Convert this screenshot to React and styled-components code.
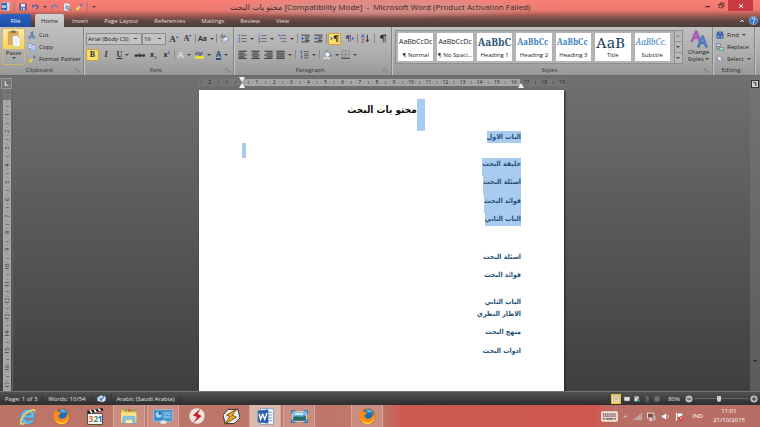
import React, { useState } from 'react';
import styled, { createGlobalStyle } from 'styled-components';

// every drawing sits on a 24 x 24 grid unless it is listed in boxes
const boxes = { paste: '0 0 42 54', keyboard: '0 0 48 32', explorer: '0 0 54 48', panel: '0 0 60 48', styles: '0 0 48 48' };

const lines = (rows) =>
  rows.map(([x, y, w]) => <rect key={y} x={x} y={y} width={w} height="2.6" fill="#333" />);

const firefox = (
  <>
    <circle cx="12" cy="12" r="11.5" fill="#e66000" />
    <circle cx="13" cy="9.5" r="8.5" fill="#1b6fb5" />
    <path d="M10 2c5-1 9 2 10 5-4-2-6 0-8-1z" fill="#57b7e6" />
    <path d="M1 8c1-3 2-4 4-6 0 2 1 3 3 3 2 0 3 1 3 2 0 2-3 2-3 4 0 4 5 5 8 3 3-1 4-4 4-8 3 4 3 9 1 12-3 5-9 6-13 4C2 20-1 14 1 8z" fill="#f58a1f" />
    <path d="M3 15c3 5 9 7 14 4 3-2 5-5 5-9 1 7-3 12-9 13-5 0-9-3-10-8z" fill="#ffc83a" />
  </>
);

const drawings = {
  word: (
    <>
      <rect x="5" y="1" width="18" height="22" fill="#f5f8fc" stroke="#6f8fbd" />
      <path d="M16 6h5M16 10h5M16 14h5M16 18h5" stroke="#7b9bcb" strokeWidth="1.5" />
      <path d="M1 4l15-2v20L1 20z" fill="#2b5fae" />
      <path d="M3 8l2 8 3-7 3 7 3-9" fill="none" stroke="#fff" strokeWidth="2" />
    </>
  ),
  save: (
    <>
      <path d="M2 2h20v20H4l-2-2z" fill="#4b62a8" stroke="#2c3f80" />
      <rect x="6" y="3" width="12" height="8" fill="#eef2fb" />
      <rect x="7" y="14" width="10" height="8" fill="#cdd7ef" />
      <rect x="9" y="16" width="3" height="5" fill="#2c3f80" />
    </>
  ),
  undo: <path d="M3 4v9h9L9 10c4-3 9-1 9 3 0 3-2 5-6 6 7 1 11-2 11-7 0-7-9-10-16-4z" fill="#4a63b5" />,
  redo: <path d="M21 4v9h-9l3-3c-4-3-9-1-9 3 0 3 2 5 6 6-7 1-11-2-11-7 0-7 9-10 16-4z" fill="#6c78c0" />,
  preview: (
    <>
      <path d="M3 1h13l5 5v17H3z" fill="#f6f6f6" stroke="#888" />
      <path d="M6 7h8M6 11h5M6 15h4" stroke="#a9b7c9" strokeWidth="2" />
      <circle cx="14" cy="14" r="5" fill="#a8cbe6" stroke="#405a77" strokeWidth="2" />
      <path d="M18 18l4 5" stroke="#405a77" strokeWidth="3" />
    </>
  ),
  brush: (
    <>
      <path d="M1 15l8-4 5 5-4 7c-5 0-9-3-9-8z" fill="#f4d45c" stroke="#b08a20" />
      <path d="M9 11l3-3 5 5-3 3z" fill="#e9eef5" stroke="#6f7c90" />
      <path d="M14 9l6-8 3 3-7 7z" fill="#4b6da9" />
    </>
  ),
  paste: (
    <>
      <rect x="3" y="5" width="31" height="42" rx="2" fill="#e2a95a" stroke="#a87730" />
      <path d="M11 8V4h4c1-4 7-4 8 0h4v4z" fill="#777" stroke="#555" />
      <path d="M17 18h16l7 7v27H17z" fill="#fdfdfd" stroke="#8c99ab" />
      <path d="M33 18v7h7" fill="#dfe6ef" stroke="#8c99ab" />
      <path d="M21 31h14M21 36h14M21 41h14M21 46h9" stroke="#c4cfdd" strokeWidth="1.5" />
    </>
  ),
  cut: (
    <>
      <path d="M15 1l-6 15M9 3l7 14" stroke="#3c5f9c" strokeWidth="2.5" />
      <circle cx="6" cy="19" r="3.5" fill="none" stroke="#2e6fc0" strokeWidth="2.5" />
      <circle cx="17" cy="19" r="3.5" fill="none" stroke="#2e6fc0" strokeWidth="2.5" />
    </>
  ),
  copy: (
    <>
      <path d="M1 2h9l3 3v12H1z" fill="#f3f7fd" stroke="#3e6cb0" strokeWidth="1.5" />
      <path d="M9 7h9l5 4v12H9z" fill="#e1ecfa" stroke="#3e6cb0" strokeWidth="1.5" />
      <path d="M12 13h8M12 16h8M12 19h8M4 7h5M4 10h4" stroke="#6d94cb" strokeWidth="1.5" />
    </>
  ),
  eraser: (
    <>
      <text x="1" y="11" fontSize="12" fill="#333">Aa</text>
      <path d="M5 17L15 6l8 5-9 11H7z" fill="#e3e8f4" stroke="#596fa2" strokeWidth="1.5" />
      <path d="M5 17l7 1 4 2" fill="none" stroke="#596fa2" />
    </>
  ),
  marker: (
    <>
      <text x="0" y="13" fontSize="12" fill="#333">ab</text>
      <path d="M10 14l7-10 5 3-7 9z" fill="#5b6c8c" />
      <rect x="0" y="17" width="24" height="6" fill="#f4f01c" />
    </>
  ),
  bullets: (
    <>
      <path d="M2 4h4M2 12h4M2 20h4" stroke="#3d6db5" strokeWidth="4" />
      <path d="M9 4h14M9 12h14M9 20h14" stroke="#555" strokeWidth="2" />
    </>
  ),
  numbering: (
    <>
      <path d="M3 1v6M2 10h3v3H2v3h3M2 18h3v5H2M2 20h3" fill="none" stroke="#3d6db5" strokeWidth="1.8" />
      <path d="M9 4h14M9 12h14M9 20h14" stroke="#555" strokeWidth="2" />
    </>
  ),
  multilevel: (
    <>
      <path d="M1 4h4M6 12h4M11 20h4" stroke="#3d6db5" strokeWidth="4" />
      <path d="M7 4h14M12 12h10M17 20h6" stroke="#555" strokeWidth="2" />
    </>
  ),
  outdent: (
    <>
      <path d="M1 3h22M11 8h12M11 13h9M1 21h20M11 17h12" stroke="#333" strokeWidth="2.4" />
      <path d="M9 12H1l4-4M1 12l4 4" fill="none" stroke="#2f68b5" strokeWidth="2.5" />
    </>
  ),
  indent: (
    <>
      <path d="M1 3h22M11 8h12M11 13h9M1 21h20M11 17h12" stroke="#333" strokeWidth="2.4" />
      <path d="M0 12h8L4 8M8 12l-4 4" fill="none" stroke="#2f68b5" strokeWidth="2.5" />
    </>
  ),
  ltr: (
    <>
      <path d="M2 7l6 5-6 5z" fill="#5573b0" />
      <path d="M14 3h9v3h-1v15h-2V6h-2v15h-2v-8c-8 0-8-10-2-10z" fill="#333" />
    </>
  ),
  rtl: (
    <>
      <path d="M23 7l-6 5 6 5z" fill="#3f62c0" />
      <path d="M7 3h9v3h-1v15h-2V6h-2v15H9v-8C1 13 1 3 7 3z" fill="#4a4f7c" />
    </>
  ),
  sort: (
    <>
      <path d="M1 10L5 1l4 9M2 7h6" fill="none" stroke="#3458b4" strokeWidth="2" />
      <path d="M2 14h6l-6 8h7" fill="none" stroke="#a13a4c" strokeWidth="2" />
      <path d="M17 2v17M13 15l4 6 4-6" fill="none" stroke="#333" strokeWidth="2.6" />
    </>
  ),
  pilcrow: <path d="M11 2h11v3h-2v17h-2V5h-3v17h-2v-9C3 13 3 2 11 2z" fill="#333" />,
  left: lines([[1, 2, 22], [1, 7, 16], [1, 12, 22], [1, 17, 16], [1, 21, 22]]),
  center: lines([[1, 2, 22], [4, 7, 16], [1, 12, 22], [4, 17, 16], [1, 21, 22]]),
  right: lines([[1, 2, 22], [7, 7, 16], [1, 12, 22], [7, 17, 16], [1, 21, 22]]),
  justify: lines([[1, 2, 22], [1, 7, 22], [1, 12, 22], [1, 17, 22], [1, 21, 22]]),
  spacing: (
    <>
      <path d="M4 2v20M1 6l3-4 3 4M1 18l3 4 3-4" fill="none" stroke="#3468b0" strokeWidth="2" />
      <path d="M11 4h12M11 10h12M11 15h12M11 21h12" stroke="#444" strokeWidth="2" />
    </>
  ),
  bucket: (
    <>
      <path d="M3 11l8-8 9 9-8 8z" fill="#eef1f6" stroke="#5b6880" strokeWidth="1.5" />
      <path d="M9 9V2c0-2 4-2 4 0" fill="none" stroke="#5b6880" strokeWidth="1.5" />
      <path d="M18 9c5 2 6 7 4 11-2-3-3-6-4-11z" fill="#3a79c8" />
      <rect x="2" y="20" width="17" height="3" fill="#f5f5f5" />
    </>
  ),
  borders: (
    <>
      <path d="M2 2h20v20M2 2v20M12 2v20M2 12h20" fill="none" stroke="#777" strokeWidth="1.4" />
      <path d="M1 22h22" stroke="#333" strokeWidth="2.5" />
    </>
  ),
  styles: (
    <>
      <path d="M2 31L14 2h5l11 29h-6l-3-8H11l-3 8zM13 18h6l-3-9z" fill="#b65cc0" stroke="#7f3c92" />
      <path d="M19 46L31 15h5l11 31h-6l-3-9H28l-3 9zM30 32h7l-4-10z" fill="#4d7fd0" stroke="#2e5594" />
    </>
  ),
  find: (
    <>
      <path d="M2 11L5 2h5v9h4V2h5l3 9v11h-9v-8h-2v8H2z" fill="#3463b0" stroke="#1f3f7d" />
      <path d="M4 14h5v5H4zM15 14h5v5h-5z" fill="#a9c7ee" />
    </>
  ),
  replace: (
    <>
      <rect x="1" y="2" width="12" height="8" rx="1" fill="#dfe7f2" stroke="#4a5d7c" strokeWidth="2" />
      <rect x="10" y="14" width="13" height="8" rx="1" fill="#bfe3c8" stroke="#2d8a4c" strokeWidth="2" />
      <path d="M3 12v6h4" fill="none" stroke="#3468b0" strokeWidth="2.5" />
    </>
  ),
  select: <path d="M6 1v18l5-4 3 8 4-2-4-7h6z" fill="#fff" stroke="#52709e" strokeWidth="1.6" />,
  proof: (
    <>
      <path d="M1 9l10-5 12 3v10l-9 5-13-4z" fill="#dfe8f5" stroke="#6d86ad" />
      <path d="M12 8v13" stroke="#6d86ad" />
      <path d="M7 11l4 6L21 2" fill="none" stroke="#3e70c4" strokeWidth="3" />
    </>
  ),
  viewPrint: (
    <>
      <rect x="2" y="2" width="20" height="20" fill="#e6e1cf" stroke="#8b7b4b" />
      <path d="M6 7h12M6 11h12M6 15h12" stroke="#948a6b" strokeWidth="1.5" />
    </>
  ),
  viewRead: <path d="M1 4c4-2 8-1 11 1 3-2 7-3 11-1v16c-4-2-8-1-11 1-3-2-7-3-11-1zM12 5v16" fill="#ececec" stroke="#777" />,
  viewWeb: (
    <>
      <rect x="2" y="2" width="17" height="19" fill="#ececec" />
      <circle cx="17" cy="17" r="6" fill="#3d9b72" />
      <path d="M5 6h11M5 10h8" stroke="#888" strokeWidth="2" />
    </>
  ),
  viewOutline: <path d="M4 3h14M9 8h10M9 13h10M4 20h14" stroke="#878787" strokeWidth="3" />,
  viewDraft: <path d="M3 3h18v18H3zM6 8h12M6 12h12M6 16h12" fill="#666" stroke="#8a8a8a" strokeWidth="1.6" />,
  minus: (
    <>
      <circle cx="12" cy="12" r="10" fill="#bbb" stroke="#eee" />
      <path d="M6 12h12" stroke="#333" strokeWidth="3" />
    </>
  ),
  plus: (
    <>
      <circle cx="12" cy="12" r="10" fill="#bbb" stroke="#eee" />
      <path d="M6 12h12M12 6v12" stroke="#333" strokeWidth="3" />
    </>
  ),
  help: (
    <>
      <circle cx="12" cy="12" r="11" fill="#3578d0" stroke="#bcd6f5" strokeWidth="1.5" />
      <path d="M8 9c0-5 8-5 8 0 0 3-4 3-4 6M12 17v3" fill="none" stroke="#fff" strokeWidth="2.6" />
    </>
  ),
  minimize: <path d="M4 16h16" stroke="#4a2020" strokeWidth="4" />,
  restore: <path d="M3 8h13v12H3zM8 8V3h13v12h-5M3 10h13" fill="none" stroke="#4a2020" strokeWidth="2.4" />,
  close: <path d="M4 5l16 14M20 5L4 19" stroke="#fff" strokeWidth="4" />,
  up: <path d="M5 16l7-8 7 8" fill="none" stroke="#eee" strokeWidth="4" />,
  launcher: <path d="M3 16V3h13M9 9l10 10M20 11v9h-9" fill="none" stroke="#666" strokeWidth="2" />,
  tabstop: <path d="M8 4v14h11" fill="none" stroke="#e8e8e8" strokeWidth="4" />,
  viewRuler: (
    <>
      <rect x="1" y="1" width="22" height="22" fill="#d4d4d4" stroke="#222" strokeWidth="3" />
      <path d="M6 7h8v11M11 12h8" fill="none" stroke="#555" strokeWidth="3" />
    </>
  ),
  ie: (
    <>
      <path d="M22 14H8c0 5 7 6 9 2h5c-2 5-6 7-10 7C5 23 1 18 2 12 3 5 8 2 13 2c6 0 10 5 9 12zM8 10h9c-1-5-8-5-9 0z" fill="#5ebcf0" stroke="#287db8" strokeWidth=".6" />
      <path d="M2 23C-2 17 8 5 17 2c5-2 8 0 5 6 1-5-2-5-6-3C8 9 0 19 5 21c2 1 5 0 7-1-4 3-8 5-10 3z" fill="#f2d057" />
    </>
  ),
  firefox,
  clapper: (
    <>
      <rect x="1" y="8" width="21" height="15" fill="#fff" stroke="#222" />
      <path d="M0 4l22-4 1 4L1 8z" fill="#222" />
      <path d="M4 3l3 4M10 2l3 4M16 1l3 3" stroke="#fff" strokeWidth="2.2" />
      <text x="2" y="20" fontSize="12" fontWeight="bold" fill="#e0672a">3</text>
      <text x="9" y="20" fontSize="12" fontWeight="bold" fill="#2d9b55">2</text>
      <text x="15" y="20" fontSize="12" fontWeight="bold" fill="#2d68c0">1</text>
    </>
  ),
  explorer: (
    <>
      <path d="M3 5h17l4 5h25v34H3z" fill="#edc85c" stroke="#b98d2c" />
      <path d="M13 4h8v6h-8zM24 3h8v7h-8zM36 5h7v5h-7z" fill="#66a85a" />
      <path d="M24 3h8v7h-8z" fill="#d45b43" />
      <path d="M3 14h46v29H3z" fill="#f8e28e" />
      <path d="M8 47V30c0-3 2-5 5-5h27c3 0 5 2 5 5v17h-8V34H16v13z" fill="#82c6ea" stroke="#3f94c4" />
      <path d="M16 40h21v5H16z" fill="#fdf4c6" />
    </>
  ),
  panel: (
    <>
      <rect x="2" y="4" width="56" height="34" rx="2" fill="#3a8cc8" stroke="#a9d5f2" strokeWidth="2" />
      <circle cx="17" cy="19" r="9" fill="#a8d8f5" />
      <path d="M17 19V10a9 9 0 0 1 8 9z" fill="#1d5f9c" />
      <path d="M32 12h8v6h-8zM44 12h8v6h-8zM32 23h8v6h-8zM44 23h8v6h-8z" fill="none" stroke="#b9e0f7" strokeWidth="2" />
      <ellipse cx="31" cy="41" rx="10" ry="6" fill="#dfe5ea" stroke="#8997a5" />
    </>
  ),
  smadav: (
    <>
      <circle cx="12" cy="12" r="11.5" fill="#eee4e0" />
      <path d="M17 1L6 11l6 3-6 9 13-11-6-3z" fill="#c21f2b" />
    </>
  ),
  winamp: (
    <>
      <path d="M7 2h14l3 12-8 8H3L0 10z" fill="#f0eee8" stroke="#333" strokeWidth="1.4" />
      <path d="M20 1L5 10l5 2-8 11 17-10-6-3z" fill="#e9a62a" stroke="#6b3f09" strokeWidth="1.2" />
    </>
  ),
  picture: (
    <>
      <rect x="2" y="5" width="20" height="14" fill="#f2f7fa" />
      <rect x="3" y="6" width="18" height="12" fill="#5eb2df" />
      <path d="M3 13c5-3 10 1 18-2v7H3z" fill="#2d6c63" />
      <path d="M5 9c4-2 8 1 12-1" stroke="#fff" strokeWidth="2" fill="none" />
      <path d="M1 8V4h5M18 4h5v4M23 16v4h-5M6 20H1v-4" fill="none" stroke="#2482bd" strokeWidth="2" />
    </>
  ),
  keyboard: (
    <>
      <rect x="1" y="2" width="46" height="28" rx="2" fill="#e8d8d4" stroke="#fff" strokeWidth="2" />
      <path d="M5 9h38M5 15h38" stroke="#6b4643" strokeWidth="4" strokeDasharray="4 2" />
      <path d="M5 23h5M13 23h22M38 23h5" stroke="#6b4643" strokeWidth="4" />
    </>
  ),
  signal: (
    <>
      <path d="M2 22v-4h3v4zM7 22v-8h3v8zM12 22V10h3v12z" fill="#fff" stroke="#6b4643" strokeWidth=".6" />
      <path d="M17 22V6h3v16zM21 22V2h2v20z" fill="#fff" stroke="#6b4643" strokeWidth=".6" />
    </>
  ),
  network: (
    <>
      <rect x="1" y="3" width="17" height="13" fill="#7b504c" stroke="#fff" strokeWidth="2" />
      <path d="M6 22h9M10 16v5" stroke="#fff" strokeWidth="2.5" />
      <path d="M16 9h7v13h-7z" fill="#f4eae8" stroke="#6b4643" />
      <path d="M19 12v7" stroke="#6b4643" strokeWidth="2" />
    </>
  ),
  speaker: (
    <>
      <path d="M2 8h5l8-6v20l-8-6H2z" fill="#fff" stroke="#6b4643" />
      <path d="M18 8c2 2 2 6 0 8" fill="none" stroke="#fff" strokeWidth="2" />
    </>
  ),
  flag: (
    <>
      <path d="M4 2v21" stroke="#fff" strokeWidth="3" />
      <path d="M6 3h14v11H6z" fill="#fff" stroke="#6b4643" />
      <circle cx="16" cy="17" r="6" fill="#d4222a" />
      <path d="M13 14l6 6M19 14l-6 6" stroke="#fff" strokeWidth="2" />
    </>
  ),
};

function Icon({ name, size = 8, wide }) {
  return (
    <svg width={wide || size} height={size} viewBox={boxes[name] || '0 0 24 24'} aria-hidden="true">
      {drawings[name]}
    </svg>
  );
}

const tabs = ['Home', 'Insert', 'Page Layout', 'References', 'Mailings', 'Review', 'View'];

const styleTiles = [
  { name: '¶ Normal', sample: 'AaBbCcDc', color: '#222' },
  { name: '¶ No Spaci...', sample: 'AaBbCcDc', color: '#222' },
  { name: 'Heading 1', sample: 'AaBbC', color: '#2c5878', serif: true, bold: true, size: 10 },
  { name: 'Heading 2', sample: 'AaBbCc', color: '#4384bb', serif: true, bold: true, size: 8 },
  { name: 'Heading 3', sample: 'AaBbCc', color: '#4384bb', serif: true, bold: true, size: 8 },
  { name: 'Title', sample: 'AaB', color: '#1d3d5c', serif: true, size: 15 },
  { name: 'Subtitle', sample: 'AaBbCc.', color: '#4384bb', serif: true, italic: true, size: 8 },
];

const paragraphs = [
  { text: 'الباب الاول', selected: true, height: 12 },
  { mark: true, height: 15 },
  { text: 'خليفة البحث', selected: true, height: 18 },
  { text: 'اسئلة البحث', selected: true, height: 19 },
  { text: 'فوائد البحث', selected: true, height: 18 },
  { text: 'الباب الثاني', selected: true, height: 13 },
  { height: 25 },
  { text: 'اسئلة البحث', height: 18 },
  { text: 'فوائد البحث', height: 18 },
  { height: 9 },
  { text: 'الباب الثاني', height: 12 },
  { text: 'الاطار النظري', height: 18 },
  { text: 'منهج البحث', height: 19 },
  { text: 'ادوات البحث', height: 18 },
];

// ruler marks: a dot on each quarter, a bar on each half, the number on each full unit
const marks = (count, first = 1) =>
  Array.from({ length: count }, (_, i) => {
    const n = i + first;
    if (n % 4 === 0) return String(Math.abs(n / 4));
    return n % 2 === 0 ? 'ı' : '·';
  });

function Tool({ icon, label, width = 13, on, menu, children }) {
  return (
    <ToolButton aria-label={label} $width={width} $on={on}>
      {icon ? <Icon name={icon} size={9} /> : children}
      {menu && <Caret />}
    </ToolButton>
  );
}

function Ruler({ from, count, dim, basis, vertical }) {
  return (
    <RulerPart $dim={dim} $basis={basis} $vertical={vertical}>
      {marks(count, from).map((m, i) => (
        <Mark key={i} $vertical={vertical}>{m}</Mark>
      ))}
    </RulerPart>
  );
}

function App() {
  const [zoom, setZoom] = useState(45);

  return (
    <>
      <GlobalStyle />
      <Window>
        <Header>
          <TitleBar>
            <QuickAccess>
              <Icon name="word" size={9} />
              <Divider />
              <QuickButton aria-label="Save"><Icon name="save" /></QuickButton>
              <QuickButton aria-label="Undo"><Icon name="undo" /></QuickButton>
              <Caret />
              <QuickButton aria-label="Redo"><Icon name="redo" /></QuickButton>
              <QuickButton aria-label="Print preview"><Icon name="preview" /></QuickButton>
              <QuickButton aria-label="Format painter"><Icon name="brush" /></QuickButton>
              <Divider />
              <Caret />
            </QuickAccess>
            <Title>
              <bdi>مختو يات البحث</bdi> [Compatibility Mode]&nbsp; -&nbsp; Microsoft Word (Product Activation Failed)
            </Title>
            <Controls>
              <ControlButton aria-label="Minimize"><Icon name="minimize" size={7} /></ControlButton>
              <ControlButton aria-label="Restore"><Icon name="restore" size={7} /></ControlButton>
              <ControlButton aria-label="Close" $close><Icon name="close" size={6} /></ControlButton>
            </Controls>
          </TitleBar>
          <TabBar>
            <FileTab>File</FileTab>
            {tabs.map((tab) => (
              <Tab key={tab} $active={tab === 'Home'}>{tab}</Tab>
            ))}
            <TabEnd>
              <QuickButton aria-label="Minimize the ribbon"><Icon name="up" size={6} /></QuickButton>
              <QuickButton aria-label="Help"><Icon name="help" size={9} /></QuickButton>
            </TabEnd>
          </TabBar>
        </Header>

        <Ribbon>
          <Group $width={84}>
            <GroupBody>
              <PasteButton>
                <PasteTop><Icon name="paste" size={17} wide={14} /></PasteTop>
                Paste
                <Caret />
              </PasteButton>
              <Stack>
                <TextButton><Icon name="cut" />Cut</TextButton>
                <TextButton><Icon name="copy" />Copy</TextButton>
                <TextButton><Icon name="brush" />Format Painter</TextButton>
              </Stack>
            </GroupBody>
            <GroupName>Clipboard<Icon name="launcher" size={5} /></GroupName>
          </Group>

          <Group $width={150}>
            <Rows>
              <ToolRow>
                <Combos>
                  <Select aria-label="Font" $width={56} defaultValue="Arial (Body CS)">
                    <option>Arial (Body CS)</option>
                  </Select>
                  <Select aria-label="Font size" $width={24} defaultValue="16">
                    <option>16</option>
                  </Select>
                </Combos>
                <Tool label="Grow font"><Letter $size={9} $serif>A<sup>▴</sup></Letter></Tool>
                <Tool label="Shrink font"><Letter $size={8} $serif>A<sup>▾</sup></Letter></Tool>
                <Divider />
                <Tool label="Change case" width={18} menu><Letter>Aa</Letter></Tool>
                <Divider />
                <Tool label="Clear formatting" icon="eraser" />
              </ToolRow>
              <ToolRow>
                <Tool label="Bold" on><Letter $size={8} $serif>B</Letter></Tool>
                <Tool label="Italic"><Letter $size={8} $serif><i>I</i></Letter></Tool>
                <Tool label="Underline" width={20} menu><Letter $size={8} $serif><u>U</u></Letter></Tool>
                <Tool label="Strikethrough"><Letter $size={6}><s>abc</s></Letter></Tool>
                <Tool label="Subscript"><Letter>x<sub>2</sub></Letter></Tool>
                <Tool label="Superscript"><Letter>x<sup>2</sup></Letter></Tool>
                <Divider />
                <Tool label="Text effects" width={18} menu><Letter $size={9} $color="#dcdcdc">A</Letter></Tool>
                <Tool label="Highlight" width={19} icon="marker" menu />
                <Tool label="Font color" width={18} menu>
                  <Letter $size={8} $color="#2c4d80" $bar>A</Letter>
                </Tool>
              </ToolRow>
            </Rows>
            <GroupName>Font<Icon name="launcher" size={5} /></GroupName>
          </Group>

          <Group $width={158}>
            <Rows>
              <ToolRow>
                <Tool label="Bullets" width={19} icon="bullets" menu />
                <Tool label="Numbering" width={19} icon="numbering" menu />
                <Tool label="Multilevel list" width={19} icon="multilevel" menu />
                <Divider />
                <Tool label="Decrease indent" width={12} icon="outdent" />
                <Tool label="Increase indent" width={12} icon="indent" />
                <Divider />
                <Tool label="Left to right" icon="ltr" on />
                <Tool label="Right to left" icon="rtl" />
                <Divider />
                <Tool label="Sort" icon="sort" />
                <Divider />
                <Tool label="Show marks" icon="pilcrow" />
              </ToolRow>
              <ToolRow $packed>
                <Tool label="Align left" icon="left" />
                <Tool label="Center" icon="center" />
                <Tool label="Align right" icon="right" />
                <Tool label="Justify" width={18} icon="justify" menu />
                <Divider />
                <Tool label="Line spacing" width={19} icon="spacing" menu />
                <Divider />
                <Tool label="Shading" width={18} icon="bucket" menu />
                <Tool label="Borders" width={18} icon="borders" menu />
              </ToolRow>
            </Rows>
            <GroupName>Paragraph<Icon name="launcher" size={5} /></GroupName>
          </Group>

          <Group $grow>
            <GroupBody>
              <Gallery>
                {styleTiles.map((tile) => (
                  <Tile key={tile.name}>
                    <Sample
                      $color={tile.color}
                      $serif={tile.serif}
                      $bold={tile.bold}
                      $italic={tile.italic}
                      $size={tile.size}
                    >
                      {tile.sample}
                    </Sample>
                    {tile.name}
                  </Tile>
                ))}
                <GalleryScroll>
                  <ScrollStep aria-label="Previous styles"><Caret $up /></ScrollStep>
                  <ScrollStep aria-label="Next styles"><Caret /></ScrollStep>
                  <ScrollStep aria-label="More styles"><Caret /></ScrollStep>
                </GalleryScroll>
              </Gallery>
              <ChangeStyles>
                <Icon name="styles" size={18} />
                <span>Change Styles <Caret /></span>
              </ChangeStyles>
            </GroupBody>
            <GroupName>Styles<Icon name="launcher" size={5} /></GroupName>
          </Group>

          <Group $width={42}>
            <Stack>
              <TextButton><Icon name="find" />Find <Caret /></TextButton>
              <TextButton><Icon name="replace" />Replace</TextButton>
              <TextButton><Icon name="select" />Select <Caret /></TextButton>
            </Stack>
            <GroupName>Editing</GroupName>
          </Group>
        </Ribbon>

        <Workspace>
          <SideColumn>
            <TabStop aria-label="Tab stop"><Icon name="tabstop" size={7} /></TabStop>
            <SideRuler>
              <Ruler vertical dim basis={10} from={-2} count={2} />
              <Ruler vertical from={1} count={69} />
            </SideRuler>
          </SideColumn>

          <Canvas>
            <TopRuler>
              <Ruler dim basis={43} from={-10} count={10} />
              <Ruler from={1} count={65} />
              <Ruler dim basis={44} from={67} count={10} />
              <Indent $side="left" $flip />
              <Indent $side="left" />
              <Indent $side="right" />
            </TopRuler>
            <Page>
              <Heading>
                مختو يات البحث
                <HeadingMark />
              </Heading>
              {paragraphs.map((p, i) => (
                <Paragraph key={i} $height={p.height} $ltr={p.mark}>
                  {p.mark && <ParagraphMark />}
                  {p.text && <Run $selected={p.selected}>{p.text}</Run>}
                </Paragraph>
              ))}
            </Page>
          </Canvas>

          <ScrollColumn>
            <QuickButton aria-label="View ruler"><Icon name="viewRuler" /></QuickButton>
            <ScrollTrack>
              <Caret $light />
            </ScrollTrack>
          </ScrollColumn>
        </Workspace>

        <StatusBar>
          <StatusItem>Page: 1 of 3</StatusItem>
          <StatusItem>Words: 10/54</StatusItem>
          <StatusItem><Icon name="proof" size={9} /></StatusItem>
          <StatusItem>Arabic (Saudi Arabia)</StatusItem>
          <StatusEnd>
            <ViewButton aria-label="Print layout" $on><Icon name="viewPrint" size={7} /></ViewButton>
            <ViewButton aria-label="Reading"><Icon name="viewRead" size={6} /></ViewButton>
            <ViewButton aria-label="Web layout"><Icon name="viewWeb" size={6} /></ViewButton>
            <ViewButton aria-label="Outline"><Icon name="viewOutline" size={6} /></ViewButton>
            <ViewButton aria-label="Draft"><Icon name="viewDraft" size={6} /></ViewButton>
            <ZoomText>80%</ZoomText>
            <QuickButton aria-label="Zoom out"><Icon name="minus" /></QuickButton>
            <ZoomSlider
              type="range"
              aria-label="Zoom"
              value={zoom}
              onChange={(e) => setZoom(e.target.value)}
            />
            <QuickButton aria-label="Zoom in"><Icon name="plus" /></QuickButton>
          </StatusEnd>
        </StatusBar>

        <TaskBar>
          <Task aria-label="Internet Explorer"><Icon name="ie" size={17} /></Task>
          <Task aria-label="Firefox"><Icon name="firefox" size={17} /></Task>
          <Task aria-label="Media Player Classic"><Icon name="clapper" size={17} /></Task>
          <Task aria-label="Explorer" $open><Icon name="explorer" size={16} wide={18} /></Task>
          <Task aria-label="Control Panel" $open><Icon name="panel" size={17} wide={20} /></Task>
          <Task aria-label="Smadav"><Icon name="smadav" size={16} /></Task>
          <Task aria-label="Winamp"><Icon name="winamp" size={17} /></Task>
          <Task aria-label="Word" $open $current><Icon name="word" size={17} /></Task>
          <Task aria-label="Photos" $open><Icon name="picture" size={17} /></Task>
          <TaskGap />
          <Task aria-label="Firefox window" $open><Icon name="firefox" size={17} /></Task>
          <Tray>
            <Icon name="keyboard" size={11} wide={17} />
            <Icon name="up" size={5} />
            <Icon name="signal" size={9} />
            <Icon name="network" size={9} />
            <Icon name="speaker" size={9} />
            <Icon name="flag" size={9} />
            <Language>IND</Language>
            <Clock>
              <span>11:01</span>
              <span>21/10/2015</span>
            </Clock>
          </Tray>
        </TaskBar>
      </Window>
    </>
  );
}

const GlobalStyle = createGlobalStyle`
  * {
    box-sizing: border-box;
  }

  body {
    margin: 0;
    font-family: 'Open Sans', 'DejaVu Sans', sans-serif;
    font-size: 6px;
    line-height: 8px;
    color: #222;
  }

  button {
    margin: 0;
    padding: 0;
    border: none;
    background: none;
    color: inherit;
    font: inherit;
    white-space: nowrap;
  }

  svg {
    display: block;
    flex: none;
  }
`;

const Window = styled.div`
  display: flex;
  flex-direction: column;
  min-height: 100vh;
`;

const Header = styled.header`
  background:
    radial-gradient(ellipse 180px 10px at 50% 8px, rgba(205, 150, 145, 0.7) 50%, transparent),
    linear-gradient(#f97f76 0, #f0776d 10px, #98584f 16px, #5f4643 21px, #4d3c3a 27px);
`;

const TitleBar = styled.div`
  display: grid;
  grid-template-columns: 1fr auto 1fr;
  align-items: start;
  height: 14px;
`;

const QuickAccess = styled.div`
  display: flex;
  align-items: center;
  gap: 4px;
  height: 13px;
  padding-left: 1px;
`;

const QuickButton = styled.button`
  display: flex;
  align-items: center;
`;

const Title = styled.div`
  font-size: 8px;
  line-height: 14px;
  color: #3b2626;
  white-space: nowrap;
`;

const Controls = styled.div`
  display: flex;
  justify-content: flex-end;
  padding-right: 7px;
`;

const ControlButton = styled.button`
  display: flex;
  align-items: center;
  justify-content: center;
  width: ${(props) => (props.$close ? '25px' : '14px')};
  height: 11px;
  background: ${(props) => (props.$close ? '#c83b44' : 'none')};
`;

const TabBar = styled.nav`
  display: flex;
  align-items: stretch;
  height: 13px;
`;

const FileTab = styled.button`
  width: 31px;
  margin-right: 4px;
  border-radius: 2px 2px 0 0;
  background: linear-gradient(#2b62c0, #1d4ea5);
  color: #fff;
`;

const Tab = styled.button`
  padding: 0 ${(props) => (props.$active ? '6px' : '8px')};
  border-radius: 2px 2px 0 0;
  background: ${(props) => (props.$active ? 'linear-gradient(#d2d0d0, #bdbdbd)' : 'none')};
  color: ${(props) => (props.$active ? '#222' : '#eadfdd')};
`;

const TabEnd = styled.div`
  display: flex;
  align-items: center;
  gap: 4px;
  margin-left: auto;
  padding-right: 2px;
`;

const Caret = styled.i`
  display: inline-block;
  flex: none;
  vertical-align: middle;
  border: 2px solid transparent;
  border-top-color: ${(props) => (props.$up ? 'transparent' : props.$light ? '#222' : '#444')};
  border-bottom-color: ${(props) => (props.$up ? '#888' : 'transparent')};
  border-bottom-width: ${(props) => (props.$up ? '2px' : '0')};
  border-top-width: ${(props) => (props.$up ? '0' : '2px')};
`;

const Divider = styled.span`
  flex: none;
  width: 1px;
  height: 9px;
  background: #8b8583;
`;

const Ribbon = styled.section`
  display: flex;
  height: 49px;
  padding-right: 5px;
  border-bottom: 1px solid #6a6a6a;
  background: linear-gradient(#bfbfbf, #acacac 60%, #989898);
`;

const Group = styled.div`
  display: flex;
  flex-direction: column;
  flex: ${(props) => (props.$grow ? '1 1 0' : `0 0 ${props.$width}px`)};
  min-width: 0;
  border-right: 1px solid #858585;
  box-shadow: 1px 0 #c4c4c4;
`;

const GroupBody = styled.div`
  display: flex;
  flex: 1;
  min-width: 0;
`;

const GroupName = styled.div`
  display: grid;
  grid-template-columns: 1fr 5px;
  align-items: center;
  height: 10px;
  padding: 0 3px;
  color: #333;
  text-align: center;
`;

const PasteButton = styled.button`
  display: flex;
  flex-direction: column;
  align-items: center;
  width: 23px;
  height: 37px;
  margin: 1px 0 0 2px;
  border: 1px solid #d0b56d;
  border-radius: 2px;
`;

const PasteTop = styled.span`
  display: flex;
  justify-content: center;
  align-self: stretch;
  padding: 1px 0 2px;
  background: linear-gradient(#fbe9a6, #f8d35a);
`;

const Stack = styled.div`
  display: flex;
  flex: 1;
  flex-direction: column;
  padding-top: 2px;
`;

const TextButton = styled.button`
  display: flex;
  align-items: center;
  gap: 3px;
  height: 12px;
  padding-left: 3px;
`;

const Rows = styled.div`
  display: flex;
  flex: 1;
  flex-direction: column;
  gap: 3px;
  padding: 5px 2px 0;
`;

const ToolRow = styled.div`
  display: flex;
  align-items: center;
  justify-content: ${(props) => (props.$packed ? 'flex-start' : 'space-between')};
  height: 13px;

  > ${Divider} {
    margin: 0 ${(props) => (props.$packed ? '2px' : '0')};
  }
`;

const Combos = styled.div`
  display: flex;
`;

const ToolButton = styled.button`
  display: flex;
  align-items: center;
  justify-content: center;
  gap: 3px;
  width: ${(props) => props.$width}px;
  height: 12px;
  border: 1px solid ${(props) => (props.$on ? '#c9a23c' : 'transparent')};
  border-radius: 1px;
  background: ${(props) => (props.$on ? '#fbdc6e' : 'none')};
`;

const Letter = styled.span`
  font-family: ${(props) => (props.$serif ? "'Liberation Serif', serif" : 'inherit')};
  font-size: ${(props) => props.$size || 7}px;
  font-weight: bold;
  line-height: 8px;
  color: ${(props) => props.$color || '#333'};
  border-bottom: ${(props) => (props.$bar ? '2px solid #1f4f93' : 'none')};

  sup,
  sub {
    font-size: 4px;
    line-height: 0;
    color: #2f5c9e;
  }
`;

const Select = styled.select`
  width: ${(props) => props.$width}px;
  height: 12px;
  padding: 0 1px;
  border: 1px solid #8d8d8d;
  border-radius: 0;
  appearance: none;
  color: #222;
  font: inherit;
  background:
    linear-gradient(#444, #444) right 4px center / 3px 1px no-repeat,
    #c3c3c3;
`;

const Gallery = styled.div`
  display: flex;
  flex: 1;
  gap: 4px;
  min-width: 0;
  height: 34px;
  margin: 3px 2px 0 3px;
  padding: 2px 0 2px 2px;
  border: 1px solid #8f8f8f;
  background: #b3b3b3;
`;

const Tile = styled.button`
  display: flex;
  flex: 1 1 0;
  flex-direction: column;
  align-items: center;
  min-width: 0;
  height: 28px;
  overflow: hidden;
  background: #fff;
`;

const Sample = styled.span`
  align-self: stretch;
  height: 18px;
  overflow: hidden;
  font-family: ${(props) => (props.$serif ? "'Noto Serif', 'DejaVu Serif', serif" : 'inherit')};
  font-size: ${(props) => props.$size || 7}px;
  font-weight: ${(props) => (props.$bold ? 'bold' : 'normal')};
  font-style: ${(props) => (props.$italic ? 'italic' : 'normal')};
  line-height: 18px;
  text-align: left;
  padding-left: 1px;
  color: ${(props) => props.$color};
`;

const GalleryScroll = styled.div`
  display: flex;
  flex: 0 0 8px;
  flex-direction: column;
  margin: -2px 0;
  border-left: 1px solid #8f8f8f;
`;

const ScrollStep = styled.button`
  flex: 1;
  background: #b9b9b9;

  & + & {
    border-top: 1px solid #8f8f8f;
  }
`;

const ChangeStyles = styled.button`
  display: flex;
  flex-direction: column;
  align-items: center;
  gap: 1px;
  width: 27px;
  padding-top: 3px;
  line-height: 7px;
  white-space: normal;
`;

const Workspace = styled.main`
  display: flex;
  flex: 1;
  background: linear-gradient(#707070, #3f3f3f);
`;

const SideColumn = styled.div`
  display: flex;
  flex-direction: column;
  width: 13px;
  border-right: 1px solid #636363;
`;

const TabStop = styled.button`
  display: flex;
  align-items: center;
  justify-content: center;
  width: 11px;
  height: 11px;
  margin: 2px 0 1px 1px;
  border: 1px solid #999;
  background: #777;
`;

const SideRuler = styled.div`
  display: flex;
  flex: 1;
  flex-direction: column;
  width: 8px;
  margin-left: 3px;
`;

const RulerPart = styled.div`
  display: flex;
  flex: ${(props) => (props.$basis ? `0 0 ${props.$basis}px` : '1 1 0')};
  flex-direction: ${(props) => (props.$vertical ? 'column' : 'row')};
  background: ${(props) => (props.$dim ? '#777' : '#a6a6a6')};
`;

const Mark = styled.span`
  display: flex;
  flex: 1 1 0;
  align-items: center;
  justify-content: center;
  min-width: 0;
  min-height: 0;
  font-size: 5px;
  line-height: 7px;
  color: #222;
  writing-mode: ${(props) => (props.$vertical ? 'sideways-lr' : 'horizontal-tb')};
`;

const Canvas = styled.div`
  display: flex;
  flex: 1;
  flex-direction: column;
  align-items: center;
`;

const TopRuler = styled.div`
  position: relative;
  display: flex;
  width: 365px;
  height: 7px;
  margin: 3px 0 4px;
`;

const Indent = styled.span`
  position: absolute;
  ${(props) => props.$side}: 40px;
  ${(props) => (props.$flip ? 'top: -2px' : 'bottom: -2px')};
  border: 3px solid transparent;
  border-${(props) => (props.$flip ? 'top' : 'bottom')}: 5px solid #f4f4f4;
  border-${(props) => (props.$flip ? 'bottom' : 'top')}: 0;
`;

const Page = styled.article`
  flex: 1;
  width: 365px;
  padding: 9px 43px 0;
  background: #fff;
  box-shadow: 1px 1px 2px #222;
`;

const Heading = styled.h1`
  display: flex;
  align-items: center;
  justify-content: center;
  height: 32px;
  margin: 0;
  padding: 0 0 11px 9px;
  font-family: 'DejaVu Sans Condensed', 'DejaVu Sans', sans-serif;
  font-size: 10px;
  color: #111;
`;

const HeadingMark = styled.span`
  width: 8px;
  height: 32px;
  margin-bottom: -11px;
  background: #a9cbf0;
`;

const Paragraph = styled.p`
  display: flex;
  direction: ${(props) => (props.$ltr ? 'ltr' : 'rtl')};
  height: ${(props) => props.$height}px;
  margin: 0;
`;

const ParagraphMark = styled.span`
  width: 4px;
  background: #a9cbf0;
`;

const Run = styled.span`
  font-family: 'DejaVu Sans Condensed', 'DejaVu Sans', sans-serif;
  font-size: 7px;
  font-weight: bold;
  line-height: 12px;
  color: #234f78;
  background: ${(props) => (props.$selected ? '#a9cbf0' : 'none')};
`;

const ScrollColumn = styled.div`
  display: flex;
  flex-direction: column;
  align-items: center;
  gap: 3px;
  width: 10px;
  padding-top: 4px;
  background: rgba(120, 120, 120, 0.5);
`;

const ScrollTrack = styled.div`
  display: flex;
  flex: 1;
  align-items: flex-end;
  padding-bottom: 29px;
`;

const StatusBar = styled.footer`
  display: flex;
  align-items: center;
  height: 14px;
  border-top: 1px solid #757575;
  background: linear-gradient(#515151, #2e2e2e);
  color: #e2e2e2;
`;

const StatusItem = styled.span`
  padding: 0 5px;
  border-right: 1px solid #343434;
  white-space: nowrap;
`;

const StatusEnd = styled.div`
  display: flex;
  align-items: center;
  gap: 2px;
  margin-left: auto;
  padding-right: 2px;
`;

const ViewButton = styled.button`
  display: flex;
  align-items: center;
  justify-content: center;
  width: ${(props) => (props.$on ? '10px' : '8px')};
  height: 10px;
  border: ${(props) => (props.$on ? '1px solid #eebc3c' : 'none')};
  background: ${(props) => (props.$on ? '#f7dc83' : 'none')};
`;

const ZoomText = styled.span`
  padding: 0 3px 0 5px;
`;

const ZoomSlider = styled.input`
  width: 53px;
  height: 8px;
  margin: 0;
  appearance: none;
  background: linear-gradient(#666, #666) center / 100% 1px no-repeat;

  &::-webkit-slider-thumb {
    appearance: none;
    width: 4px;
    height: 6px;
    border-radius: 0 0 2px 2px;
    background: #d0d0d0;
  }
`;

const TaskBar = styled.footer`
  display: flex;
  align-items: stretch;
  gap: 2px;
  height: 22px;
  padding: 0 15px 0 11px;
  background: linear-gradient(90deg, #bb7468, #bf776b 50%, #cb5a52 53%, #cf5850 78%, #b86e65 81%, #b86e65);
`;

const Task = styled.button`
  display: flex;
  align-items: center;
  justify-content: center;
  width: 32px;
  border: 1px solid ${(props) => (props.$open ? '#d6a59b' : 'transparent')};
  border-width: 0 1px;
  background: ${(props) => (props.$current ? '#dab8b0' : props.$open ? '#c98d82' : 'none')};
`;

const TaskGap = styled.span`
  width: 32px;
`;

const Tray = styled.div`
  display: flex;
  align-items: center;
  gap: 5px;
  margin-left: auto;
  color: #fff;
`;

const Language = styled.span`
  padding: 0 5px 0 4px;
`;

const Clock = styled.time`
  display: flex;
  flex-direction: column;
  align-items: center;
  line-height: 9px;
`;

export default App;
